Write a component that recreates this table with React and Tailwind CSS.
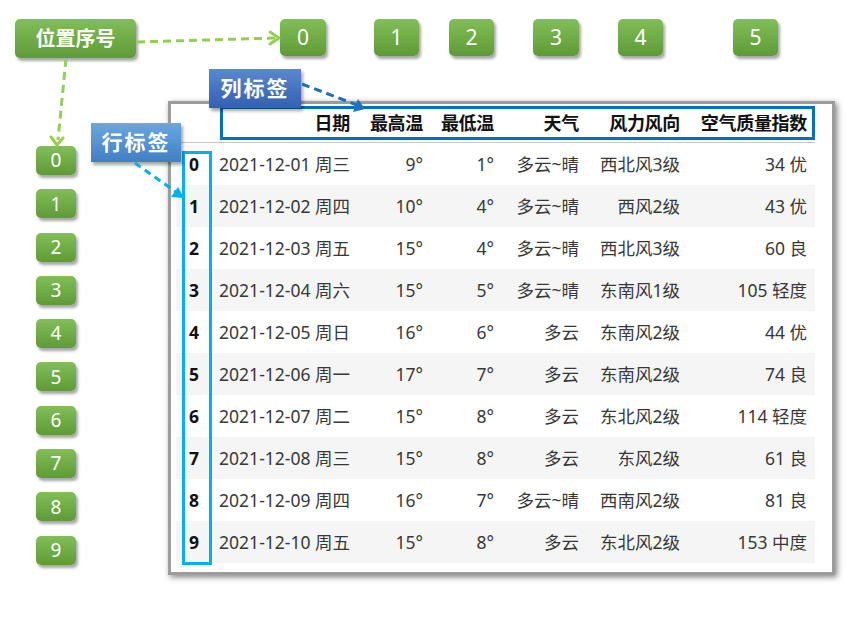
import React from "react";

const rows = [
  ["2021-12-01 周三", "9°", "1°", "多云~晴", "西北风3级", "34 优"],
  ["2021-12-02 周四", "10°", "4°", "多云~晴", "西风2级", "43 优"],
  ["2021-12-03 周五", "15°", "4°", "多云~晴", "西北风3级", "60 良"],
  ["2021-12-04 周六", "15°", "5°", "多云~晴", "东南风1级", "105 轻度"],
  ["2021-12-05 周日", "16°", "6°", "多云", "东南风2级", "44 优"],
  ["2021-12-06 周一", "17°", "7°", "多云", "东南风2级", "74 良"],
  ["2021-12-07 周二", "15°", "8°", "多云", "东北风2级", "114 轻度"],
  ["2021-12-08 周三", "15°", "8°", "多云", "东风2级", "61 良"],
  ["2021-12-09 周四", "16°", "7°", "多云~晴", "西南风2级", "81 良"],
  ["2021-12-10 周五", "15°", "8°", "多云", "东北风2级", "153 中度"],
];

const headers = ["日期", "最高温", "最低温", "天气", "风力风向", "空气质量指数"];

const grid = "grid grid-cols-[36px_146px_73px_71px_85px_101px_127px]";

const topBoxes = [
  { label: "0", cls: "left-[280px] w-[46px]" },
  { label: "1", cls: "left-[374px] w-[45px]" },
  { label: "2", cls: "left-[449px] w-[45px]" },
  { label: "3", cls: "left-[533px] w-[46px]" },
  { label: "4", cls: "left-[618px] w-[45px]" },
  { label: "5", cls: "left-[733px] w-[45px]" },
];

const greenBox =
  "bg-linear-to-b from-[#82bf57] to-[#5e9a36] rounded-[5px] shadow-[2px_3px_3px_rgba(0,0,0,0.35)] text-white flex items-center justify-center";

export default function App() {
  return (
    <div
      className="relative w-[865px] h-[619px] bg-white overflow-hidden"
      style={{ fontFamily: '"Noto Sans", "Noto Sans CJK SC", sans-serif' }}
    >
      {/* table frame */}
      <div className="pt-[101px] pl-[168px]">
        <div className="w-[667px] border-[3px] border-[#9c9c9c] bg-white shadow-[2px_2px_6px_rgba(0,0,0,0.5)] pl-[5px] pr-[17px] pb-[9px]">
          <div className={`${grid} h-[39px] border-b border-[#c4c4c4] items-center text-[18px] font-bold text-[#111]`}>
            <div />
            {headers.map((h) => (
              <div key={h} className="text-right pr-[8px] whitespace-nowrap tracking-[-0.3px]">
                {h}
              </div>
            ))}
          </div>
          {rows.map((r, i) => (
            <div
              key={i}
              className={`${grid} h-[42px] items-center text-[17.5px] text-[#383838] ${
                i % 2 === 1 ? "bg-[#f5f5f5]" : "bg-white"
              }`}
            >
              <div className="text-center font-bold text-[#111]">{i}</div>
              {r.map((c, j) => (
                <div key={j} className="text-right pr-[8px] whitespace-nowrap">
                  {c}
                </div>
              ))}
            </div>
          ))}
        </div>
      </div>

      {/* column header highlight */}
      <div className="absolute left-[220px] top-[106px] w-[595px] h-[34px] border-[3px] border-[#0070c0]" />
      {/* row index highlight */}
      <div className="absolute left-[182px] top-[151px] w-[30px] h-[414px] border-[3px] border-[#00b0f0]" />

      {/* 位置序号 */}
      <div className={`absolute left-[15px] top-[19px] w-[121px] h-[39px] ${greenBox} text-[20px] font-bold`}>
        位置序号
      </div>

      {/* top position boxes */}
      {topBoxes.map((b) => (
        <div key={b.label} className={`absolute top-[19px] h-[37px] ${b.cls} ${greenBox} text-[21px]`}>
          {b.label}
        </div>
      ))}

      {/* left position boxes */}
      <div className="absolute left-[36px] top-[146px] flex flex-col gap-[14.3px]">
        {Array.from({ length: 10 }, (_, i) => (
          <div key={i} className={`w-[40px] h-[29px] ${greenBox} text-[19px]`}>
            {i}
          </div>
        ))}
      </div>

      {/* 列标签 */}
      <div className="absolute left-[209px] top-[69px] w-[92px] h-[39px] bg-linear-to-b from-[#5a88cf] to-[#3460b0] shadow-[2px_3px_3px_rgba(0,0,0,0.35)] text-white text-[21px] font-bold flex items-center justify-center tracking-[2px]">
        列标签
      </div>

      {/* 行标签 */}
      <div className="absolute left-[91px] top-[123px] w-[90px] h-[39px] bg-linear-to-b from-[#6aa7e0] to-[#3f7fc4] shadow-[2px_3px_3px_rgba(0,0,0,0.35)] text-white text-[21px] font-bold flex items-center justify-center tracking-[2px]">
        行标签
      </div>

      {/* arrows */}
      <svg className="absolute left-0 top-0 pointer-events-none" width="865" height="619">
        <g stroke="#92d050" strokeWidth="3" fill="none" strokeDasharray="8 5">
          <line x1="137" y1="42" x2="275" y2="38" />
          <line x1="66" y1="59" x2="58" y2="140" />
        </g>
        <g stroke="#92d050" strokeWidth="3" fill="none" strokeLinecap="round" strokeLinejoin="round">
          <polyline points="270,32 279,38 270,44" />
          <polyline points="51,137 57,145 63,138" />
        </g>
        <line x1="302" y1="84" x2="357" y2="105" stroke="#1f6fc0" strokeWidth="3" strokeDasharray="8 5" />
        <polygon points="365,109 353,112 358,99" fill="#1f6fc0" />
        <line x1="135" y1="163" x2="176" y2="192" stroke="#00b0f0" strokeWidth="3" strokeDasharray="7 5" />
        <polygon points="184,198 171,197 178,187" fill="#00b0f0" />
      </svg>
    </div>
  );
}
